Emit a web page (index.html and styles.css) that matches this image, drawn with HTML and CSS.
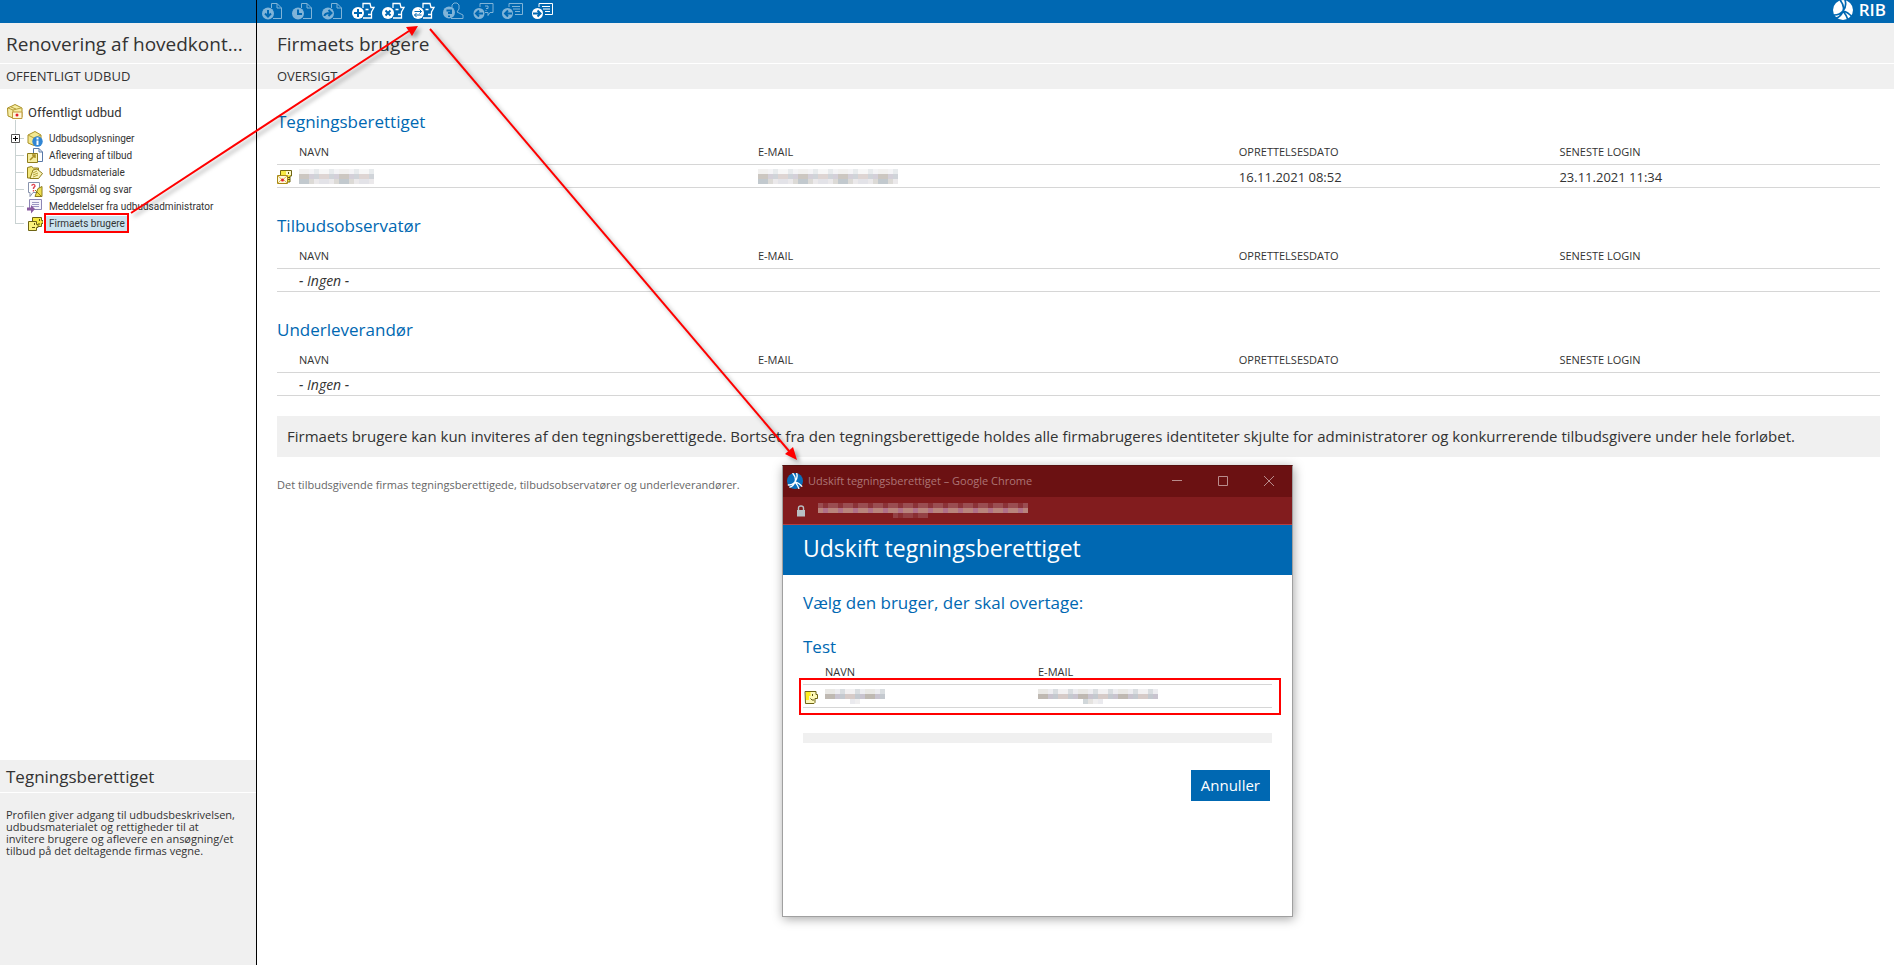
FILE: index.html
```html
<!DOCTYPE html>
<html lang="da">
<head>
  <meta charset="UTF-8">
  <meta name="viewport" content="width=device-width, initial-scale=1.0">
  <title>Firmaets brugere</title>
  <link rel="stylesheet" href="styles.css">
</head>
<body>

  <!-- shared icon shapes -->
  <svg class="defs" aria-hidden="true">
    <symbol id="doc" viewBox="0 0 24 20">
      <path d="M10.5 8V3.5H16L20.5 8V18.5H12M16 3.5V8H20.5" fill="none" stroke="#fff"/>
      <circle cx="7" cy="13.5" r="6" fill="#fff"/>
    </symbol>
    <symbol id="face" viewBox="0 0 24 20">
      <path d="M12 8V3.500H19L20 7.500H23L20.500 12V18H12" fill="none" stroke="#fff" stroke-width="1.300"/>
      <path d="M14.500 9.500h3M17 14.500h3.500" stroke="#fff" stroke-width="1.300"/>
      <circle cx="7" cy="13" r="6" fill="#fff"/>
    </symbol>
    <symbol id="note" viewBox="0 0 24 20">
      <path d="M8 7V3.500H21.5V14.5H14" fill="none" stroke="#fff"/>
      <path d="M11 6.500h8M12 9h7M14 11.500h5" stroke="#fff"/>
      <circle cx="6.500" cy="13.500" r="5.500" fill="#fff"/>
    </symbol>
    <symbol id="globe" viewBox="0 0 20 20">
      <circle class="ball" cx="10" cy="10" r="10"/>
      <path class="cut" d="M7 0Q12 6 10 11Q7 15 1 15M12 0Q14 6 10 11M10 11Q15 12 19 17M10 11Q14 16 15 20M10 11Q8 17 3 18" fill="none" stroke-width="1.700"/>
    </symbol>
    <symbol id="user" viewBox="0 0 16 16">
      <path d="M2 2.500h11v3h1.500v4H12v4l-1 1H2.500z" fill="#fdf8b8" stroke="#6e6414"/>
      <path d="M3 3h4.500v4H6v4H3z" fill="#ffee1c"/>
      <path d="M9.500 5v2M7.500 9.500L9 11h2" fill="none" stroke="#5c5310"/>
    </symbol>
    <symbol id="sealed" viewBox="0 0 16 16">
      <path d="M3.500 6V1.500h11V7h-1.500v6h-3" fill="#f6e942" stroke="#6e6414"/>
      <path d="M9 2h5v4H9z" fill="#fdf9c8"/>
      <path d="M11.500 3v2M11 8.500h2M11 10.500h2" stroke="#5c5310"/>
      <path d="M.5 6.500h10v8H.5z" fill="#fff8dc" stroke="#a98a14"/>
      <path d="M1 7l4.500 4L10 7M1 14l3-3M10 14l-3-3" fill="none" stroke="#dcb856"/>
      <circle cx="5.500" cy="11" r="1.500" fill="#e3202c"/>
    </symbol>
  </svg>

  <header class="topbar">
    <div class="toolbar">
      <button disabled aria-label="Hent"><svg><use href="#doc"/><path class="ink" d="M7 10v6M4 13.500l3 3 3-3"/></svg></button>
      <button disabled aria-label="Historik"><svg><use href="#doc"/><path class="ink" d="M7 9.500v4.500h4"/></svg></button>
      <button disabled aria-label="Videresend"><svg><use href="#doc"/><path class="ink" d="M3.500 16q0-3 6-3M7.500 10l3 3-3 3"/></svg></button>
      <button aria-label="Tilføj bruger"><svg><use href="#face"/><path class="ink" d="M7 9v8M3 13h8"/></svg></button>
      <button aria-label="Fjern bruger"><svg><use href="#face"/><path class="ink" d="M4.500 10.500l5 5M9.500 10.500l-5 5"/></svg></button>
      <button aria-label="Udskift bruger"><svg><use href="#face"/><path class="ink thin" d="M3.500 11.500h7M8.500 9.500l2 2-2 2M10.500 15h-7M5.500 13l-2 2 2 2"/></svg></button>
      <button disabled aria-label="Ukendt bruger"><svg><path d="M11 8V5l2-2h3l2 2v4l-2 3 6 3v3.500H10" fill="none" stroke="#fff"/><circle cx="8" cy="12.500" r="6" fill="#fff"/><path class="ink" d="M5.500 10.500h4.500v2.500H8v1M8 15.500v1.500"/></svg></button>
      <button disabled aria-label="Svar"><svg><path d="M9 7V3.500h13v9h-3l-2 3v-3h-3" fill="none" stroke="#fff"/><path d="M14 6h3v2.500h-2M15 10v1" fill="none" stroke="#fff"/><circle cx="8" cy="13.500" r="5.500" fill="#fff"/><path class="ink" d="M12 13.500H5M8 10.500l-3 3 3 3"/></svg></button>
      <button disabled aria-label="Forrige meddelelse"><svg><use href="#note"/><path class="ink" d="M11 13.500H4M7 10.500l-3 3 3 3"/></svg></button>
      <button aria-label="Næste meddelelse"><svg><use href="#note"/><path class="ink" d="M2 13.500h8M6.500 10.500l3 3-3 3"/></svg></button>
    </div>
    <div class="brand"><svg class="globe"><use href="#globe"/></svg>RIB</div>
  </header>

  <div class="page">
    <aside class="sidebar">
      <h1 class="title">Renovering af hovedkont...</h1>
      <div class="subtitle">OFFENTLIGT UDBUD</div>

      <nav class="tree">
        <a class="root" href="#">
          <svg class="icon" viewBox="0 0 16 16"><path d="M.5 4L5 2l3-1.500L15 4v9l-9 1L1 12z" fill="#f7eea4" stroke="#a98f25"/><path d="M1 4l5 2 8-2M4 3l5 2M6 6v8" fill="none" stroke="#b79f3c"/><path d="M5.500 8h9.500v6.500H5.500z" fill="#fff7da" stroke="#c09a3c"/><circle cx="10" cy="11" r="1.500" fill="#e3202c"/></svg>
          Offentligt udbud
        </a>
        <ul>
          <li>
            <button class="expand" aria-label="Fold ud"><svg viewBox="0 0 9 9"><path d="M.5.500h8v8h-8z" fill="#fff" stroke="#555"/><path d="M2 4.500h5M4.500 2v5" stroke="#000"/></svg></button>
            <svg class="icon" viewBox="0 0 16 16"><path d="M1 4l7-3.500L14 4v8l-7 2.500L1 12z" fill="#f3e892" stroke="#a98f25"/><path d="M1 4l6 3 7-3M7 7v7" fill="none" stroke="#b79f3c"/><circle cx="10.500" cy="10.500" r="5.200" fill="#3186d4"/><path d="M10.500 9.500V14M10.500 6.500v2" stroke="#fff" stroke-width="2"/></svg>
            <a href="#">Udbudsoplysninger</a>
          </li>
          <li>
            <svg class="icon" viewBox="0 0 16 16"><path d="M6.500.5H12L15.500 4v9.500h-9z" fill="#fff" stroke="#5878a8"/><path d="M12 .5V4h3.500" fill="none" stroke="#5878a8"/><path d="M.5 5.500h10v9H.5z" fill="#f6eda0" stroke="#8f7d1c"/><path d="M3 12l5-5M5 7h3v3" fill="none" stroke="#a98f25" stroke-width="1.500"/></svg>
            <a href="#">Aflevering af tilbud</a>
          </li>
          <li>
            <svg class="icon" viewBox="0 0 16 16"><path d="M.5 2.500l4-1 2 1.500h5v10H.5z" fill="#f3e77c" stroke="#8f7d1c"/><path d="M3 13.500L6 5l4-1 5.500 4.500-4 5z" fill="#f9f3b8" stroke="#8f7d1c"/><path d="M6 8l4-2M6 10l5-2M6 12l5-2" stroke="#b9a636"/></svg>
            <a href="#">Udbudsmateriale</a>
          </li>
          <li>
            <svg class="icon" viewBox="0 0 16 16"><path d="M1.500.5h11v10H6l-3 4v-4H1.500z" fill="#fff" stroke="#8893ad"/><path d="M4.500 3.500q3-2.500 3.500.5L6.500 6v1M6.500 8v1.500" fill="none" stroke="#e04450" stroke-width="1.400"/><path d="M8 14.500l3-8 4-2v10H8z" fill="#eedf50" stroke="#8f7d1c"/><path d="M8 8l6 6" stroke="#8f7d1c"/></svg>
            <a href="#">Spørgsmål og svar</a>
          </li>
          <li>
            <svg class="icon" viewBox="0 0 16 16"><path d="M2.500.5h12v10h-12z" fill="#f6f4fb" stroke="#8c86b4"/><path d="M5 3.500h7M5 5.500h7M5 7.500h7" stroke="#9c98c2"/><path d="M0 8.500v3h4v3l4-4.500-4-4v2.500z" fill="#8a5aa0"/></svg>
            <a href="#">Meddelelser fra udbudsadministrator</a>
          </li>
          <li>
            <svg class="icon" viewBox="0 0 16 16"><path d="M5.500 1.500h9v3H16v3h-1.500v3h-9z" fill="#f6e942" stroke="#6e6414"/><path d="M12.500 3v2M11 8h2" stroke="#5c5310"/><path d="M1.500 5.500h8v3H11v3H9.500v3h-8z" fill="#fbf27c" stroke="#6e6414"/><path d="M7.500 7v2M5 11.500h3" stroke="#5c5310"/></svg>
            <a class="current" href="#">Firmaets brugere</a>
          </li>
        </ul>
      </nav>

      <section class="help">
        <h2 class="help-title">Tegningsberettiget</h2>
        <p>Profilen giver adgang til udbudsbeskrivelsen, udbudsmaterialet og rettigheder til at<br>invitere brugere og aflevere en ansøgning/et<br>tilbud på det deltagende firmas vegne.</p>
      </section>
    </aside>

    <main class="main">
      <h1 class="title">Firmaets brugere</h1>
      <div class="subtitle">OVERSIGT</div>

      <div class="content">
        <h2>Tegningsberettiget</h2>
        <table class="users">
          <tr><th></th><th class="name">NAVN</th><th class="mail">E-MAIL</th><th class="date">OPRETTELSESDATO</th><th class="date">SENESTE LOGIN</th></tr>
          <tr>
            <td><svg class="icon"><use href="#sealed"/></svg></td>
            <td><span class="mosaic" data-width="76" data-rows="0.3 0.8 0.8"></span></td>
            <td><span class="mosaic" data-width="141" data-rows="0.3 0.8 0.8"></span></td>
            <td>16.11.2021 08:52</td>
            <td>23.11.2021 11:34</td>
          </tr>
        </table>

        <h2>Tilbudsobservatør</h2>
        <table class="users">
          <tr><th></th><th class="name">NAVN</th><th class="mail">E-MAIL</th><th class="date">OPRETTELSESDATO</th><th class="date">SENESTE LOGIN</th></tr>
          <tr><td></td><td class="none" colspan="4">- Ingen -</td></tr>
        </table>

        <h2>Underleverandør</h2>
        <table class="users">
          <tr><th></th><th class="name">NAVN</th><th class="mail">E-MAIL</th><th class="date">OPRETTELSESDATO</th><th class="date">SENESTE LOGIN</th></tr>
          <tr><td></td><td class="none" colspan="4">- Ingen -</td></tr>
        </table>

        <div class="note">Firmaets brugere kan kun inviteres af den tegningsberettigede. Bortset fra den tegningsberettigede holdes alle firmabrugeres identiteter skjulte for administratorer og konkurrerende tilbudsgivere under hele forløbet.</div>
        <p class="footnote">Det tilbudsgivende firmas tegningsberettigede, tilbudsobservatører og underleverandører.</p>
      </div>
    </main>
  </div>

  <div class="window" role="dialog" aria-label="Udskift tegningsberettiget">
    <div class="window-bar">
      <svg class="globe"><use href="#globe"/></svg>
      <span class="window-name">Udskift tegningsberettiget – Google Chrome</span>
      <button aria-label="Minimer"><svg viewBox="0 0 12 12"><path d="M1 5.500h10"/></svg></button>
      <button aria-label="Maksimer"><svg viewBox="0 0 12 12"><path d="M1.500 1.500h9v9h-9z"/></svg></button>
      <button aria-label="Luk"><svg viewBox="0 0 12 12"><path d="M1 1l10 10M11 1L1 11"/></svg></button>
    </div>
    <div class="address">
      <svg viewBox="0 0 10 12"><path d="M2.500 5V3q0-2 2.500-2t2.500 2v2" fill="none" stroke="#b9c0c4" stroke-width="1.400"/><path d="M1 5h8v6.500H1z" fill="#b9c0c4"/></svg>
      <span class="mosaic dark" data-width="211" data-rows="0.8 1 0.6"></span>
    </div>
    <h1>Udskift tegningsberettiget</h1>
    <div class="window-body">
      <p class="lead">Vælg den bruger, der skal overtage:</p>
      <h2>Test</h2>
      <table class="users picker">
        <tr><th></th><th class="name">NAVN</th><th>E-MAIL</th></tr>
        <tr>
          <td><svg class="icon"><use href="#user"/></svg></td>
          <td><span class="mosaic" data-width="60" data-rows="0.5 1 0.6"></span></td>
          <td><span class="mosaic" data-width="120" data-rows="0.5 1 0.6"></span></td>
        </tr>
      </table>
      <div class="divider"></div>
      <div class="actions"><button>Annuller</button></div>
    </div>
  </div>

  <!-- frames and arrows between the steps -->
  <svg class="marks" aria-hidden="true">
    <path d="M45 214h83v18H45zM800 679h480v35H800z"/>
    <g class="arrows">
      <path d="M131 213L409 31"/>
      <path class="head" d="M418 26L412 36 406 27z"/>
      <path d="M430 29L789 451"/>
      <path class="head" d="M797 460L785 454 793 447z"/>
    </g>
  </svg>

  <script>
    // fills the masked names and addresses with coloured blocks
    const light = ["#d3d1cc", "#c4c9cf", "#dcdce2", "#bfb9b2", "#e6e4e6", "#c9c4cf", "#b3bcc2", "#d6cbc8"];
    const dark = ["#a05a5e", "#b2787e", "#8f3a3e", "#b9847c", "#9c4a50", "#b07088"];

    document.querySelectorAll(".mosaic").forEach(function (box) {
      const colors = box.classList.contains("dark") ? dark : light;
      const count = Math.round(box.dataset.width / 5);
      const rows = box.dataset.rows.split(" ");
      rows.forEach(function (opacity, row) {
        for (let i = 0; i < count; i++) {
          const cell = document.createElement("i");
          const n = (i * 7 + row * 3 + i * i) % colors.length;
          const hidden = row === 2 && rows[2] === "0.6" && (i < count * 0.35 || i > count * 0.5);
          cell.style.background = hidden ? "transparent" : colors[n];
          cell.style.opacity = opacity;
          box.appendChild(cell);
        }
      });
      box.style.width = count * 5 + "px";
    });
  </script>

</body>
</html>
```
FILE: styles.css
```css
* {
  box-sizing: border-box;
}
body {
  margin: 0;
  height: 100vh;
  display: flex;
  flex-direction: column;
  overflow: hidden;
  background: #fff;
  color: #333;
  font-family: "Open Sans", "Noto Sans", sans-serif;
  font-size: 13px;
}
h1, h2, p, ul {
  margin: 0;
  padding: 0;
  font-weight: normal;
}
button {
  padding: 0;
  border: 0;
  background: none;
  font-family: inherit;
}
a {
  color: inherit;
  text-decoration: none;
}
.defs {
  position: absolute;
  width: 0;
  height: 0;
}
.icon {
  display: block;
  flex: none;
  width: 16px;
  height: 16px;
}

/* top bar */
.topbar {
  flex: none;
  display: flex;
  justify-content: space-between;
  height: 23px;
  padding-left: 256px;
  background: #0068b2;
}
.toolbar {
  display: flex;
  gap: 6px;
  padding-left: 4px;
  border-left: 1px solid #000;
}
.toolbar button, .toolbar svg {
  display: block;
  width: 24px;
  height: 20px;
}
.toolbar button:disabled {
  opacity: 0.5;
}
.ink {
  fill: none;
  stroke: #0068b2;
  stroke-width: 2;
}
.thin {
  stroke-width: 1;
}
.globe {
  width: 20px;
  height: 20px;
}
.ball {
  fill: var(--ball, #fff);
}
.cut {
  stroke: var(--cut, #0068b2);
}
.brand {
  display: flex;
  gap: 6px;
  padding-right: 8px;
  color: #fff;
  font-size: 17px;
  font-weight: 600;
  line-height: 20px;
}

/* columns */
.page {
  flex: 1;
  display: flex;
  min-height: 0;
}
.sidebar {
  flex: none;
  display: flex;
  flex-direction: column;
  width: 257px;
  border-right: 1px solid #000;
}
.main {
  flex: 1;
  min-width: 0;
}
.title, .subtitle {
  padding-left: 6px;
  background: #f0f0f0;
}
.title {
  height: 41px;
  border-bottom: 1px solid #fff;
  font-size: 19px;
  line-height: 42px;
  white-space: nowrap;
}
.subtitle {
  height: 25px;
  font-size: 13px;
  line-height: 25px;
}
.main .title, .main .subtitle {
  padding-left: 20px;
}

/* tree */
.tree {
  flex: 1;
  padding: 15px 7px;
  font-family: Roboto, "Open Sans", sans-serif;
}
.root {
  display: flex;
  align-items: center;
  gap: 5px;
  height: 16px;
}
.tree ul {
  margin-left: 8px;
  padding-top: 10px;
  list-style: none;
  font-size: 10px;
  background: linear-gradient(#c9d2d2, #c9d2d2) no-repeat 0 0 / 1px 103px;
}
.tree li {
  display: flex;
  align-items: center;
  gap: 3px;
  height: 17px;
}
.tree li::before {
  content: "";
  width: 9px;
  border-top: 1px solid #c9d2d2;
}
.tree li a {
  padding: 0 3px;
  line-height: 15px;
  white-space: nowrap;
}
.expand {
  order: -1;
  z-index: 1;
  margin: 0 -8px 0 -4px;
}
.expand svg {
  display: block;
  width: 9px;
  height: 9px;
}
.tree .current {
  background: #cbe3ef;
}

/* help box */
.help {
  height: 205px;
  background: #f0f0f0;
}
.help-title {
  height: 33px;
  padding-left: 6px;
  border-bottom: 1px solid #fff;
  font-size: 17px;
  line-height: 33px;
}
.help p {
  padding: 16px 6px;
  font-size: 11px;
  line-height: 12px;
}

/* content */
.content {
  padding: 21px 14px 0 20px;
}
.content h2, .window h2, .lead {
  color: #0068b2;
  font-size: 17px;
  line-height: 24px;
}
.users {
  width: 100%;
  margin-bottom: 26px;
  border-collapse: separate;
  border-spacing: 0;
  table-layout: fixed;
}
.users th {
  height: 31px;
  padding: 4px 0 0;
  border-bottom: 1px solid #d6d6d6;
  font-size: 11px;
  font-weight: normal;
  text-align: left;
}
.users td {
  height: 23px;
  padding: 1px 0 0;
  border-bottom: 1px solid #d6d6d6;
  font-size: 13px;
  line-height: 20px;
}
.users th:first-child {
  width: 22px;
}
.users .name {
  width: calc(30% - 22px);
}
.users .mail {
  width: 30%;
}
.users .date {
  width: 20%;
}
.users .none {
  font-size: 14px;
  font-style: italic;
}
.mosaic {
  display: grid;
  grid-template-columns: repeat(auto-fill, 5px);
  grid-auto-rows: 5px;
}
.note {
  margin-top: -6px;
  padding: 0 10px;
  background: #f0f0f0;
  font-size: 15px;
  line-height: 41px;
  white-space: nowrap;
}
.footnote {
  margin-top: 18px;
  color: #666;
  font-size: 11px;
  line-height: 20px;
}

/* popup window */
.window {
  position: absolute;
  left: 782px;
  top: 465px;
  width: 511px;
  height: 452px;
  border: 1px solid #a0a0a0;
  border-top-color: #54100f;
  background: #fff;
  box-shadow: 1px 2px 10px rgba(0, 0, 0, 0.35);
}
.window-bar {
  --ball: #0a6fba;
  --cut: #fff;
  display: flex;
  align-items: center;
  height: 31px;
  padding: 0 17px 2px 4px;
  background: #6b1112;
  color: #ad7576;
  font-size: 11px;
}
.window-bar .globe {
  width: 16px;
  height: 16px;
  margin-right: 5px;
}
.window-name {
  flex: 1;
}
.window-bar button, .window-bar button svg {
  display: block;
  width: 12px;
  height: 12px;
}
.window-bar button {
  margin-left: 34px;
}
.window-bar button path {
  fill: none;
  stroke: #b98c8c;
}
.address {
  display: flex;
  align-items: center;
  gap: 12px;
  height: 28px;
  padding-left: 13px;
  border-bottom: 1px solid #b33f41;
  background: #821c1e;
}
.address svg {
  width: 10px;
  height: 12px;
}
.window h1 {
  height: 50px;
  padding-left: 20px;
  background: #0068b2;
  color: #fff;
  font-size: 23px;
  line-height: 46px;
}
.window-body {
  padding: 16px 20px;
}
.window h2 {
  margin-top: 20px;
}
.window .users {
  margin-bottom: 25px;
}
.window .picker th {
  height: 26px;
  padding: 0;
}
.users.picker .name {
  width: 213px;
}
.divider {
  height: 10px;
  background: #f0f0f0;
}
.actions {
  display: flex;
  justify-content: flex-end;
  padding: 27px 2px;
}
.actions button {
  padding: 0 10px;
  background: #0068b2;
  color: #fff;
  font-size: 15px;
  line-height: 31px;
}

/* frames and arrows */
.marks {
  position: absolute;
  left: 0;
  top: 0;
  width: 100%;
  height: 100%;
  pointer-events: none;
}
.marks path {
  fill: none;
  stroke: #f00;
  stroke-width: 2;
}
.marks .head {
  fill: #f00;
  stroke: none;
}
.arrows {
  filter: drop-shadow(3px 3px 2px rgba(0, 0, 0, 0.35));
}
```
